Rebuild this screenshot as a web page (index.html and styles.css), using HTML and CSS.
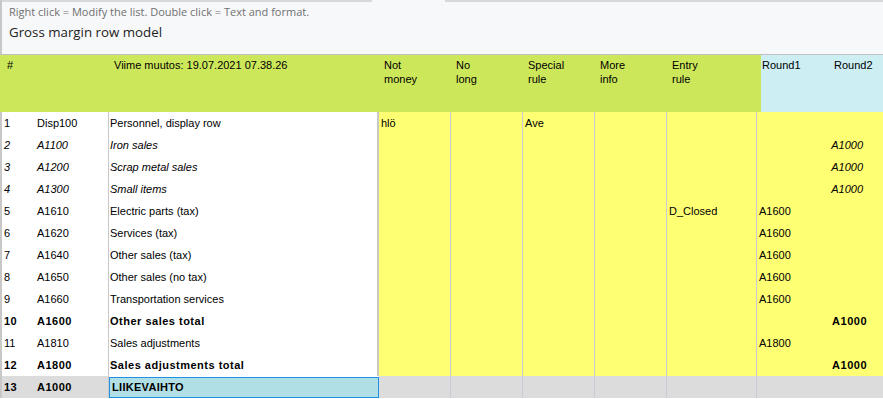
FILE: index.html
```html
<!DOCTYPE html>
<html lang="en">
<head>
    <meta charset="UTF-8">
    <meta name="viewport" content="width=device-width, initial-scale=1.0">
    <title>Gross margin row model</title>
    <link rel="stylesheet" href="styles.css">
</head>
<body>
    <div class="top">
        <div class="hint">Right click = Modify the list. Double click = Text and format.</div>
        <div class="title">Gross margin row model</div>
    </div>

    <table class="grid">
        <colgroup>
            <col class="c-num">
            <col class="c-code">
            <col class="c-name">
            <col class="c-mid">
            <col class="c-mid">
            <col class="c-mid">
            <col class="c-mid">
            <col class="c-entry">
            <col class="c-r1">
            <col class="c-r2">
        </colgroup>
        <thead>
            <tr>
                <th>#</th>
                <th></th>
                <th class="h-name">Viime muutos: 19.07.2021 07.38.26</th>
                <th>Not<br>money</th>
                <th>No<br>long</th>
                <th>Special<br>rule</th>
                <th>More<br>info</th>
                <th>Entry<br>rule</th>
                <th class="round first">Round1</th>
                <th class="round">Round2</th>
            </tr>
        </thead>
        <tbody>
            <tr>
                <td class="num">1</td><td>Disp100</td><td class="name">Personnel, display row</td>
                <td class="y">hlö</td><td class="y"></td><td class="y">Ave</td><td class="y"></td><td class="y"></td>
                <td class="y r1"></td><td class="y r2"></td>
            </tr>
            <tr class="it">
                <td class="num">2</td><td>A1100</td><td class="name">Iron sales</td>
                <td class="y"></td><td class="y"></td><td class="y"></td><td class="y"></td><td class="y"></td>
                <td class="y r1"></td><td class="y r2">A1000</td>
            </tr>
            <tr class="it">
                <td class="num">3</td><td>A1200</td><td class="name">Scrap metal sales</td>
                <td class="y"></td><td class="y"></td><td class="y"></td><td class="y"></td><td class="y"></td>
                <td class="y r1"></td><td class="y r2">A1000</td>
            </tr>
            <tr class="it">
                <td class="num">4</td><td>A1300</td><td class="name">Small items</td>
                <td class="y"></td><td class="y"></td><td class="y"></td><td class="y"></td><td class="y"></td>
                <td class="y r1"></td><td class="y r2">A1000</td>
            </tr>
            <tr>
                <td class="num">5</td><td>A1610</td><td class="name">Electric parts (tax)</td>
                <td class="y"></td><td class="y"></td><td class="y"></td><td class="y"></td><td class="y">D_Closed</td>
                <td class="y r1">A1600</td><td class="y r2"></td>
            </tr>
            <tr>
                <td class="num">6</td><td>A1620</td><td class="name">Services (tax)</td>
                <td class="y"></td><td class="y"></td><td class="y"></td><td class="y"></td><td class="y"></td>
                <td class="y r1">A1600</td><td class="y r2"></td>
            </tr>
            <tr>
                <td class="num">7</td><td>A1640</td><td class="name">Other sales (tax)</td>
                <td class="y"></td><td class="y"></td><td class="y"></td><td class="y"></td><td class="y"></td>
                <td class="y r1">A1600</td><td class="y r2"></td>
            </tr>
            <tr>
                <td class="num">8</td><td>A1650</td><td class="name">Other sales (no tax)</td>
                <td class="y"></td><td class="y"></td><td class="y"></td><td class="y"></td><td class="y"></td>
                <td class="y r1">A1600</td><td class="y r2"></td>
            </tr>
            <tr>
                <td class="num">9</td><td>A1660</td><td class="name">Transportation services</td>
                <td class="y"></td><td class="y"></td><td class="y"></td><td class="y"></td><td class="y"></td>
                <td class="y r1">A1600</td><td class="y r2"></td>
            </tr>
            <tr class="bold">
                <td class="num">10</td><td>A1600</td><td class="name">Other sales total</td>
                <td class="y"></td><td class="y"></td><td class="y"></td><td class="y"></td><td class="y"></td>
                <td class="y r1"></td><td class="y r2">A1000</td>
            </tr>
            <tr>
                <td class="num">11</td><td>A1810</td><td class="name">Sales adjustments</td>
                <td class="y"></td><td class="y"></td><td class="y"></td><td class="y"></td><td class="y"></td>
                <td class="y r1">A1800</td><td class="y r2"></td>
            </tr>
            <tr class="bold">
                <td class="num">12</td><td>A1800</td><td class="name">Sales adjustments total</td>
                <td class="y"></td><td class="y"></td><td class="y"></td><td class="y"></td><td class="y"></td>
                <td class="y r1"></td><td class="y r2">A1000</td>
            </tr>
            <tr class="bold selected">
                <td class="num">13</td><td>A1000</td><td class="name"><span class="edit">LIIKEVAIHTO</span></td>
                <td class="y"></td><td class="y"></td><td class="y"></td><td class="y"></td><td class="y"></td>
                <td class="y r1"></td><td class="y r2"></td>
            </tr>
        </tbody>
    </table>
</body>
</html>
```

FILE: styles.css
```css
body {
    margin: 0;
    background-color: #ffffff;
    font-family: "Liberation Sans", Arial, sans-serif;
    font-size: 11px;
    color: #000;
    overflow: hidden;
}

.top {
    height: 55px;
    box-sizing: border-box;
    background-color: #f7f8fa;
    border-left: 2px solid #c8c8c8;
    border-bottom: 1px solid #c0c0c0;
    background-image: linear-gradient(to right, #d6d8dc 370px, transparent 370px, transparent 443px, #d6d8dc 443px);
    background-size: 100% 2px;
    background-repeat: no-repeat;
    padding: 4px 0 0 7px;
}

.hint {
    font-family: "Open Sans", sans-serif;
    font-size: 11px;
    color: #707070;
    line-height: 15px;
}

.title {
    font-family: "Open Sans", sans-serif;
    font-size: 13.3px;
    color: #222;
    margin-top: 4px;
    line-height: 18px;
}

.grid {
    border-collapse: separate;
    border-spacing: 0;
    table-layout: fixed;
    width: 883px;
}

.c-num { width: 35px; }
.c-code { width: 73px; }
.c-name { width: 271px; }
.c-mid { width: 72px; }
.c-entry { width: 90px; }
.c-r1 { width: 72px; }
.c-r2 { width: 54px; }

.grid th {
    background-color: #cde75b;
    height: 57px;
    padding: 3px 0 0 5px;
    box-sizing: border-box;
    vertical-align: top;
    text-align: left;
    font-weight: normal;
    line-height: 14px;
    white-space: nowrap;
}

.grid th:first-child {
    padding-left: 7px;
}

.grid th.h-name {
    padding-left: 6px;
}

.grid th.round {
    background-color: #cdeef3;
}

.grid th.round.first {
    background-image: linear-gradient(to right, #cde75b 4px, transparent 4px);
}

.grid td {
    height: 22px;
    padding: 0 0 0 2px;
    box-sizing: border-box;
    white-space: nowrap;
    overflow: hidden;
}

.grid td.num {
    border-left: 2px solid #c8c8c8;
    padding-left: 2px;
}

.grid td.name {
    border-left: 1px solid #c8c8c8;
    border-right: 2px solid #c8c8c8;
    padding-left: 1px;
}

.grid td.y {
    background-color: #ffff74;
    border-right: 1px solid #cacad6;
}

.grid td.y.r1 {
    border-right: none;
}

.grid td.y.r2 {
    border-right: none;
    text-align: right;
    padding-right: 16px;
}

.grid tr.it td {
    font-style: italic;
}

.grid tr.it td.r2 {
    padding-right: 20px;
}

.grid tr.bold td {
    font-weight: bold;
    letter-spacing: 0.5px;
}

.grid tr.selected td {
    background-color: #dcdcdc;
}

.grid tr.selected td.name {
    background-color: #ffffff;
    border-right: none;
    padding: 0;
}

.edit {
    display: block;
    height: 21px;
    line-height: 19px;
    box-sizing: border-box;
    background-color: #b0e0e6;
    border: 1px solid #1e90e6;
    padding-left: 2px;
    letter-spacing: 0.3px;
}
```
